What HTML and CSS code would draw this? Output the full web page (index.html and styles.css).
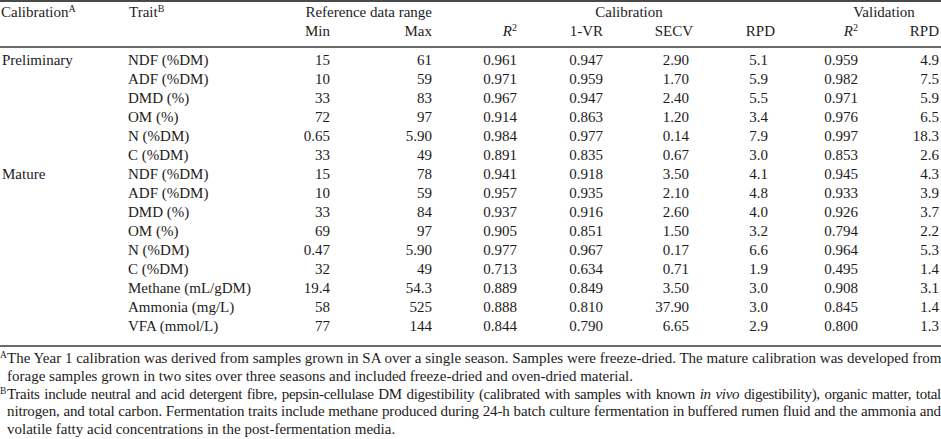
FILE: index.html
```html
<!DOCTYPE html>
<html lang="en">
<head>
<meta charset="utf-8">
<title>Calibration table</title>
<link rel="stylesheet" href="styles.css">
</head>
<body>
<div class="page">
<table class="data">
  <colgroup>
    <col class="c-cal"><col class="c-trait"><col class="c-min"><col class="c-max"><col class="c-r2"><col class="c-vr"><col class="c-secv"><col class="c-rpd"><col class="c-vr2"><col class="c-vrpd">
  </colgroup>
  <thead>
    <tr class="h1">
      <th class="left" rowspan="2">Calibration<sup>A</sup></th>
      <th class="left" rowspan="2">Trait<sup>B</sup></th>
      <th class="num" colspan="2">Reference data range</th>
      <th class="group-cal" colspan="4">Calibration</th>
      <th class="group-val" colspan="2">Validation</th>
    </tr>
    <tr class="h2">
      <th class="num">Min</th>
      <th class="num">Max</th>
      <th class="num"><i>R</i><sup>2</sup></th>
      <th class="num">1-VR</th>
      <th class="num">SECV</th>
      <th class="num">RPD</th>
      <th class="num"><i>R</i><sup>2</sup></th>
      <th class="num">RPD</th>
    </tr>
  </thead>
  <tbody>
    <tr class="first"><td>Preliminary</td><td>NDF (%DM)</td><td class="num">15</td><td class="num">61</td><td class="num">0.961</td><td class="num">0.947</td><td class="num secv">2.90</td><td class="num rpd">5.1</td><td class="num">0.959</td><td class="num vrpd">4.9</td></tr>
    <tr><td></td><td>ADF (%DM)</td><td class="num">10</td><td class="num">59</td><td class="num">0.971</td><td class="num">0.959</td><td class="num secv">1.70</td><td class="num rpd">5.9</td><td class="num">0.982</td><td class="num vrpd">7.5</td></tr>
    <tr><td></td><td>DMD (%)</td><td class="num">33</td><td class="num">83</td><td class="num">0.967</td><td class="num">0.947</td><td class="num secv">2.40</td><td class="num rpd">5.5</td><td class="num">0.971</td><td class="num vrpd">5.9</td></tr>
    <tr><td></td><td>OM (%)</td><td class="num">72</td><td class="num">97</td><td class="num">0.914</td><td class="num">0.863</td><td class="num secv">1.20</td><td class="num rpd">3.4</td><td class="num">0.976</td><td class="num vrpd">6.5</td></tr>
    <tr><td></td><td>N (%DM)</td><td class="num">0.65</td><td class="num">5.90</td><td class="num">0.984</td><td class="num">0.977</td><td class="num secv">0.14</td><td class="num rpd">7.9</td><td class="num">0.997</td><td class="num vrpd">18.3</td></tr>
    <tr><td></td><td>C (%DM)</td><td class="num">33</td><td class="num">49</td><td class="num">0.891</td><td class="num">0.835</td><td class="num secv">0.67</td><td class="num rpd">3.0</td><td class="num">0.853</td><td class="num vrpd">2.6</td></tr>
    <tr><td>Mature</td><td>NDF (%DM)</td><td class="num">15</td><td class="num">78</td><td class="num">0.941</td><td class="num">0.918</td><td class="num secv">3.50</td><td class="num rpd">4.1</td><td class="num">0.945</td><td class="num vrpd">4.3</td></tr>
    <tr><td></td><td>ADF (%DM)</td><td class="num">10</td><td class="num">59</td><td class="num">0.957</td><td class="num">0.935</td><td class="num secv">2.10</td><td class="num rpd">4.8</td><td class="num">0.933</td><td class="num vrpd">3.9</td></tr>
    <tr><td></td><td>DMD (%)</td><td class="num">33</td><td class="num">84</td><td class="num">0.937</td><td class="num">0.916</td><td class="num secv">2.60</td><td class="num rpd">4.0</td><td class="num">0.926</td><td class="num vrpd">3.7</td></tr>
    <tr><td></td><td>OM (%)</td><td class="num">69</td><td class="num">97</td><td class="num">0.905</td><td class="num">0.851</td><td class="num secv">1.50</td><td class="num rpd">3.2</td><td class="num">0.794</td><td class="num vrpd">2.2</td></tr>
    <tr><td></td><td>N (%DM)</td><td class="num">0.47</td><td class="num">5.90</td><td class="num">0.977</td><td class="num">0.967</td><td class="num secv">0.17</td><td class="num rpd">6.6</td><td class="num">0.964</td><td class="num vrpd">5.3</td></tr>
    <tr><td></td><td>C (%DM)</td><td class="num">32</td><td class="num">49</td><td class="num">0.713</td><td class="num">0.634</td><td class="num secv">0.71</td><td class="num rpd">1.9</td><td class="num">0.495</td><td class="num vrpd">1.4</td></tr>
    <tr><td></td><td>Methane (mL/gDM)</td><td class="num">19.4</td><td class="num">54.3</td><td class="num">0.889</td><td class="num">0.849</td><td class="num secv">3.50</td><td class="num rpd">3.0</td><td class="num">0.908</td><td class="num vrpd">3.1</td></tr>
    <tr><td></td><td>Ammonia (mg/L)</td><td class="num">58</td><td class="num">525</td><td class="num">0.888</td><td class="num">0.810</td><td class="num secv">37.90</td><td class="num rpd">3.0</td><td class="num">0.845</td><td class="num vrpd">1.4</td></tr>
    <tr class="last"><td></td><td>VFA (mmol/L)</td><td class="num">77</td><td class="num">144</td><td class="num">0.844</td><td class="num">0.790</td><td class="num secv">6.65</td><td class="num rpd">2.9</td><td class="num">0.800</td><td class="num vrpd">1.3</td></tr>
  </tbody>
</table>
<div class="notes">
  <p class="note">
    <span class="line"><sup>A</sup>The Year 1 calibration was derived from samples grown in SA over a single season. Samples were freeze-dried. The mature calibration was developed from</span>
    <span class="line end">forage samples grown in two sites over three seasons and included freeze-dried and oven-dried material.</span>
  </p>
  <p class="note">
    <span class="line tight"><sup>B</sup>Traits include neutral and acid detergent fibre, pepsin-cellulase DM digestibility (calibrated with samples with known <i>in vivo</i> digestibility), organic matter, total</span>
    <span class="line snug">nitrogen, and total carbon. Fermentation traits include methane produced during 24-h batch culture fermentation in buffered rumen fluid and the ammonia and</span>
    <span class="line end">volatile fatty acid concentrations in the post-fermentation media.</span>
  </p>
</div>
</div>
</body>
</html>
```

FILE: styles.css
```css
html, body {
  margin: 0;
  padding: 0;
  background: #ffffff;
}

body {
  font-family: "Liberation Serif", "Times New Roman", serif;
  font-size: 15px;
  color: #1e1b1c;
}

.page {
  width: 941px;
}

.data {
  width: 941px;
  table-layout: fixed;
  border-collapse: collapse;
  border-top: 2px solid #4a4a4a;
  border-bottom: 2px solid #6a6a6a;
}

.c-cal { width: 128px; }
.c-trait { width: 132px; }
.c-min { width: 70px; }
.c-max { width: 102px; }
.c-r2 { width: 85px; }
.c-vr { width: 86px; }
.c-secv { width: 90px; }
.c-rpd { width: 82px; }
.c-vr2 { width: 83px; }
.c-vrpd { width: 83px; }

.data th,
.data td {
  padding: 0;
  font-weight: normal;
  line-height: 19px;
  white-space: nowrap;
  vertical-align: top;
  text-align: left;
}

.data th.num,
.data td.num {
  text-align: right;
}

.data thead {
  border-bottom: 2px solid #6a6a6a;
}

.h1 th {
  padding-top: 1px;
}

.h1 th.left {
  padding-left: 1px;
}

.h2 th {
  padding-bottom: 5px;
}

.data th.group-cal {
  text-align: center;
  padding-left: 51px;
}

.data th.group-val {
  text-align: center;
  padding-left: 52px;
}

.data td.secv { padding-right: 4px; }
.data td.rpd { padding-right: 7px; }
.data td.vrpd,
.h2 th:last-child { padding-right: 2px; }

.data td:first-child {
  padding-left: 2px;
}

.first td {
  padding-top: 3px;
}

.last td {
  padding-bottom: 9px;
}

sup {
  font-size: 10px;
  line-height: 0;
  vertical-align: 5px;
}

.notes {
  padding-top: 3px;
}

.note {
  margin: 0;
  padding-left: 7px;
  line-height: 17.8px;
}

.line {
  display: block;
  text-align: justify;
  text-align-last: justify;
  white-space: nowrap;
}

.line sup {
  display: inline-block;
  width: 7px;
  margin-left: -7px;
  font-size: 9.5px;
  vertical-align: 5px;
  line-height: 1;
}

.line.end {
  text-align-last: left;
}

.line.tight {
  letter-spacing: -0.3px;
  word-spacing: -1px;
}

.line.snug {
  letter-spacing: -0.12px;
  word-spacing: -1px;
}
```
